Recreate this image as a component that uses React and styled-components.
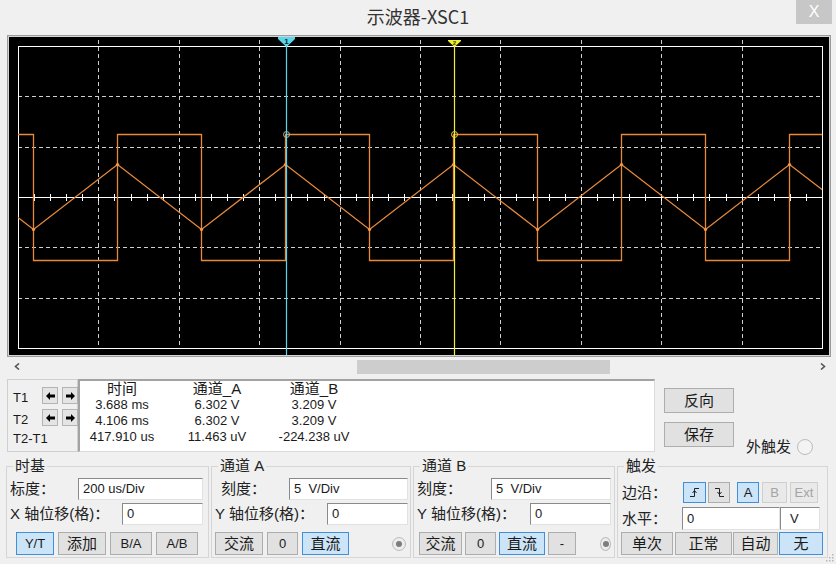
import React from 'react';
import styled, { createGlobalStyle } from 'styled-components';

const CJK = `"Noto Sans CJK SC", sans-serif`;
const UI = `"Liberation Sans", "Noto Sans CJK SC", sans-serif`;

const GlobalStyle = createGlobalStyle`
  html, body { margin: 0; padding: 0; background: #f0f0f0; }
  body { font-family: ${UI}; color: #1a1a1a; }
  * { box-sizing: border-box; }
`;

// scope geometry (page coordinates)
const X0 = 18, X1 = 822, Y0 = 46, Y1 = 348, MID = 197.5;
const DIVX = (X1 - X0) / 10, DIVY = (Y1 - Y0) / 6;
const HIGH = 134.5, LOW = 260.5, PEAK = 164.5, TROUGH = 229.5;
const edges = Array.from({ length: 10 }, (_, k) => 33.5 + 84 * k);
const px = (v) => Math.round(v) + 0.5;

const Window = styled.div`
  position: relative;
  width: 836px;
  height: 564px;
  overflow: hidden;
  background: #f0f0f0;
  display: flex;
  flex-direction: column;
`;

const TitleBar = styled.div`
  height: 35px;
  display: grid;
  grid-template-columns: 1fr auto 1fr;
  align-items: start;
`;

const Title = styled.div`
  grid-column: 2;
  padding-top: 5px;
  font-family: ${CJK};
  font-size: 18px;
  line-height: 22px;
  color: #333;
`;

const CloseButton = styled.div`
  grid-column: 3;
  justify-self: end;
  width: 36px;
  height: 24px;
  margin-right: 4px;
  background: #c7c7c7;
  color: #fff;
  font: 16px/24px "Liberation Sans", sans-serif;
  text-align: center;
`;

const ScreenFrame = styled.div`
  margin-left: 7px;
  width: 824px;
  height: 322px;
  padding: 1px;
  border: 1px solid #9c9c9c;
  background: #d4d4d4;
  svg { display: block; }
`;

const HScroll = styled.div`
  display: flex;
  height: 18px;
  padding: 0 5px 0 7px;
`;

const ScrollArrow = styled.div`
  width: ${(p) => p.$w}px;
  display: flex;
  align-items: center;
  justify-content: center;
`;

const Track = styled.div`
  flex: 1;
  padding-top: 3px;
`;

const Thumb = styled.div`
  margin-left: 330px;
  width: 253px;
  height: 14px;
  background: #cdcdcd;
`;

const ReadoutRow = styled.div`
  display: flex;
  align-items: flex-start;
  margin-top: 4px;
  height: 73px;
`;

const CursorPanel = styled.div`
  margin-left: 7px;
  width: 71px;
  height: 73px;
  border: 1px solid #cfcfcf;
  padding: 7px 0 0 5px;
  display: grid;
  grid-template-columns: 25px 16px 16px;
  grid-auto-rows: 17px;
  column-gap: 4px;
  row-gap: 5px;
  font-size: 13px;
  line-height: 17px;
`;

const CursorLabel = styled.div`
  grid-column: ${(p) => (p.$wide ? '1 / -1' : 'auto')};
  margin-top: ${(p) => (p.$wide ? 0 : 2)}px;
  line-height: ${(p) => (p.$wide ? 16 : 17)}px;
`;

const ArrowButton = styled.div`
  width: 16px;
  height: 17px;
  border: 1px solid #b4b4b4;
  background: #e4e4e4;
  display: flex;
  align-items: center;
  justify-content: center;
`;

const ReadoutTable = styled.div`
  width: 577px;
  height: 73px;
  background: #fff;
  border-top: 2px solid #a3a3a3;
  border-left: 2px solid #a3a3a3;
  border-right: 1px solid #dadada;
  border-bottom: 1px solid #dadada;
  display: grid;
  grid-template-columns: 84px 106px 88px;
  grid-auto-rows: 16px;
  align-content: start;
  font-size: 13px;
  line-height: 16px;
  text-align: center;
`;

const HeadCell = styled.div`
  font-size: 15px;
  line-height: 16px;
`;

const SideButtons = styled.div`
  margin: 9px 0 0 9px;
  display: flex;
  flex-direction: column;
  gap: 9px;
`;

const SideButton = styled.div`
  width: 70px;
  height: 25px;
  border: 1px solid #adadad;
  background: #e1e1e1;
  font-size: 15px;
  line-height: 23px;
  text-align: center;
`;

const ExtTrigger = styled.div`
  margin: 59px 0 0 12px;
  display: flex;
  align-items: center;
  gap: 6px;
  font-size: 15px;
  line-height: 18px;
  color: #222;
`;

const RoundIndicator = styled.span`
  width: ${(p) => p.$size}px;
  height: ${(p) => p.$size}px;
  border-radius: 50%;
  border: 1px solid #bcbcbc;
  background: ${(p) => (p.$on ? '#ececec' : '#f3f3f3')};
  display: flex;
  align-items: center;
  justify-content: center;
  margin-left: ${(p) => p.$ml || 0}px;
  margin-right: ${(p) => p.$mr || 0}px;
  &::after {
    content: '';
    display: ${(p) => (p.$on ? 'block' : 'none')};
    width: 6px;
    height: 6px;
    border-radius: 50%;
    background: #7d7d7d;
  }
`;

const ControlRow = styled.div`
  display: flex;
  gap: 2px;
  margin-top: 5px;
  padding-left: 6px;
`;

const Group = styled.fieldset`
  margin: 0;
  min-inline-size: 0;
  width: ${(p) => p.$w}px;
  padding: 0 ${(p) => p.$pr}px 2px 3px;
  border: 1px solid #d5d5d5;
  display: flex;
  flex-direction: column;
`;

const Legend = styled.legend`
  margin-left: 3px;
  padding: 0 2px;
  font-size: 15px;
  line-height: 18px;
  color: #222;
`;

const FieldRow = styled.div`
  display: flex;
  align-items: center;
  justify-content: ${(p) => (p.$start ? 'flex-start' : 'space-between')};
  height: ${(p) => p.$h}px;
  margin-top: ${(p) => p.$mt}px;
`;

const FieldLabel = styled.span`
  width: ${(p) => (p.$w ? `${p.$w}px` : 'auto')};
  font-size: 15px;
  line-height: 20px;
  color: #222;
  white-space: nowrap;
  padding-left: ${(p) => p.$pl || 0}px;
`;

const TextBox = styled.div`
  width: ${(p) => p.$w}px;
  height: ${(p) => p.$h || 22}px;
  background: #fff;
  border: 1px solid;
  border-color: #8a8a8a #e2e2e2 #e2e2e2 #8a8a8a;
  padding-left: ${(p) => p.$pl || 4}px;
  font-size: 13px;
  line-height: ${(p) => (p.$h || 22) - 2}px;
  white-space: pre;
`;

const ButtonRow = styled.div`
  display: flex;
  align-items: center;
  gap: ${(p) => p.$gap}px;
  height: 23px;
  margin-top: ${(p) => p.$mt}px;
  padding-left: ${(p) => p.$pl || 0}px;
`;

const Btn = styled.div`
  width: ${(p) => p.$w}px;
  height: ${(p) => p.$h || 23}px;
  margin-left: ${(p) => p.$ml || 0}px;
  flex: none;
  display: flex;
  align-items: center;
  justify-content: center;
  border: 1px solid ${(p) => (p.$active ? '#3f8fdc' : p.$disabled ? '#cfcfcf' : '#adadad')};
  background: ${(p) => (p.$active ? '#cce4f7' : p.$disabled ? '#e9e9e9' : '#e1e1e1')};
  color: ${(p) => (p.$disabled ? '#a4a4a4' : '#1a1a1a')};
  font-size: ${(p) => (p.$latin ? 13 : 15)}px;
  line-height: 20px;
`;

const Grip = styled.svg`
  position: absolute;
  right: 2px;
  bottom: 2px;
`;

function Chevron({ dir }) {
  const d = dir === 'left' ? 'M5,0.5 L1.5,3.5 L5,6.5' : 'M1,0.5 L4.5,3.5 L1,6.5';
  return (
    <svg width="6" height="7" viewBox="0 0 6 7">
      <path d={d} fill="none" stroke="#555" strokeWidth="1.6" />
    </svg>
  );
}

function BlockArrow({ dir }) {
  const pts = dir === 'left' ? '0,4 4,0 4,2.5 9,2.5 9,5.5 4,5.5 4,8' : '9,4 5,0 5,2.5 0,2.5 0,5.5 5,5.5 5,8';
  return (
    <svg width="9" height="8" viewBox="0 0 9 8">
      <polygon points={pts} fill="#000" />
    </svg>
  );
}

function EdgeIcon({ rising }) {
  const line = rising ? 'M1,9.5 H5.5 V1.5 H10' : 'M1,1.5 H5.5 V9.5 H10';
  const head = rising ? 'M3.5,6 L5.5,3.5 L7.5,6' : 'M3.5,5 L5.5,7.5 L7.5,5';
  return (
    <svg width="11" height="11" viewBox="0 0 11 11">
      <path d={line} fill="none" stroke="#222" strokeWidth="1" />
      <path d={head} fill="none" stroke="#222" strokeWidth="1" />
    </svg>
  );
}

function Scope() {
  const vLines = Array.from({ length: 9 }, (_, i) => px(X0 + DIVX * (i + 1)));
  const hLines = [1, 2, 4, 5].map((j) => px(Y0 + DIVY * j));
  const ticks = Array.from({ length: 49 }, (_, i) => px(X0 + (DIVX / 5) * (i + 1)));

  let square = `M${X0},${HIGH}`;
  edges.forEach((x, k) => {
    square += ` H${x} V${k % 2 === 0 ? LOW : HIGH}`;
  });
  square += ` H${X1}`;

  const triangle = [[X0, 217.5], ...edges.map((x, k) => [x, k % 2 === 0 ? TROUGH : PEAK]), [X1, 189.6]]
    .map((p) => p.join(','))
    .join(' ');

  return (
    <svg width="820" height="318" viewBox="9 37 820 318">
      <rect x="9" y="37" width="820" height="318" fill="#000" />
      {vLines.map((x) => (
        <line key={`v${x}`} x1={x} x2={x} y1="40" y2={Y1} stroke="#cfcfcf" strokeDasharray="4 3" />
      ))}
      {hLines.map((y) => (
        <line key={`h${y}`} x1={X0} x2={X1} y1={y} y2={y} stroke="#cfcfcf" strokeDasharray="4 3" />
      ))}
      <rect x={X0 + 0.5} y={Y0 + 0.5} width={X1 - X0} height={Y1 - Y0} fill="none" stroke="#fff" />
      <line x1={X0} x2={X1} y1={MID} y2={MID} stroke="#fff" />
      {ticks.map((x) => (
        <line key={`t${x}`} x1={x} x2={x} y1={MID - 3.5} y2={MID + 3.5} stroke="#fff" />
      ))}
      <path d={square} fill="none" stroke="#e8893a" strokeWidth="1.3" />
      <polyline points={triangle} fill="none" stroke="#e8893a" strokeWidth="1.3" />
      {edges.map((x, k) => (
        <circle key={`d${x}`} cx={x} cy={k % 2 === 0 ? TROUGH : PEAK} r="1.6" fill="#f29a48" />
      ))}

      <line x1="286.5" x2="286.5" y1="45" y2="355" stroke="#5cd6ea" strokeWidth="1.2" />
      <polygon points="278,37 295,37 295,39 286.5,47 278,39" fill="#5cd6ea" />
      <text x="286.5" y="44" fontSize="8" fontWeight="bold" fill="#0b2a30" textAnchor="middle" fontFamily="Liberation Sans">1</text>
      <circle cx="286.5" cy={HIGH} r="3" fill="none" stroke="#9fb8bd" />

      <line x1="454.5" x2="454.5" y1="45" y2="355" stroke="#f2f032" strokeWidth="1.2" />
      <polygon points="448,40 461,40 461,41 454.5,47 448,41" fill="#f2f032" />
      <text x="454.5" y="45" fontSize="6" fontWeight="bold" fill="#3a3a00" textAnchor="middle" fontFamily="Liberation Sans">2</text>
      <circle cx="454.5" cy={HIGH} r="3" fill="none" stroke="#e0de40" />
    </svg>
  );
}

const readouts = [
  ['3.688 ms', '6.302 V', '3.209 V'],
  ['4.106 ms', '6.302 V', '3.209 V'],
  ['417.910 us', '11.463 uV', '-224.238 uV'],
];

export default function App() {
  return (
    <Window>
      <GlobalStyle />
      <TitleBar>
        <Title>示波器-XSC1</Title>
        <CloseButton>X</CloseButton>
      </TitleBar>

      <ScreenFrame>
        <Scope />
      </ScreenFrame>

      <HScroll>
        <ScrollArrow $w={20}><Chevron dir="left" /></ScrollArrow>
        <Track><Thumb /></Track>
        <ScrollArrow $w={17}><Chevron dir="right" /></ScrollArrow>
      </HScroll>

      <ReadoutRow>
        <CursorPanel>
          <CursorLabel>T1</CursorLabel>
          <ArrowButton><BlockArrow dir="left" /></ArrowButton>
          <ArrowButton><BlockArrow dir="right" /></ArrowButton>
          <CursorLabel>T2</CursorLabel>
          <ArrowButton><BlockArrow dir="left" /></ArrowButton>
          <ArrowButton><BlockArrow dir="right" /></ArrowButton>
          <CursorLabel $wide>T2-T1</CursorLabel>
        </CursorPanel>

        <ReadoutTable>
          <HeadCell>时间</HeadCell>
          <HeadCell>通道_A</HeadCell>
          <HeadCell>通道_B</HeadCell>
          {readouts.map((row) => row.map((v, i) => <div key={`${v}${i}${row[0]}`}>{v}</div>))}
        </ReadoutTable>

        <SideButtons>
          <SideButton>反向</SideButton>
          <SideButton>保存</SideButton>
        </SideButtons>

        <ExtTrigger>
          外触发
          <RoundIndicator $size={16} />
        </ExtTrigger>
      </ReadoutRow>

      <ControlRow>
        <Group $w={203} $pr={5}>
          <Legend>时基</Legend>
          <FieldRow $h={22} $mt={3}>
            <FieldLabel>标度：</FieldLabel>
            <TextBox $w={125}>200 us/Div</TextBox>
          </FieldRow>
          <FieldRow $h={22} $mt={3}>
            <FieldLabel>X 轴位移(格)：</FieldLabel>
            <TextBox $w={81}>0</TextBox>
          </FieldRow>
          <ButtonRow $gap={4} $mt={7} $pl={6}>
            <Btn $w={38} $latin $active>Y/T</Btn>
            <Btn $w={48}>添加</Btn>
            <Btn $w={42} $latin>B/A</Btn>
            <Btn $w={42} $latin>A/B</Btn>
          </ButtonRow>
        </Group>

        <Group $w={200} $pr={2}>
          <Legend>通道 A</Legend>
          <FieldRow $h={22} $mt={3}>
            <FieldLabel $pl={6}>刻度：</FieldLabel>
            <TextBox $w={119}>5  V/Div</TextBox>
          </FieldRow>
          <FieldRow $h={22} $mt={3}>
            <FieldLabel>Y 轴位移(格)：</FieldLabel>
            <TextBox $w={81}>0</TextBox>
          </FieldRow>
          <ButtonRow $gap={4} $mt={7}>
            <Btn $w={48}>交流</Btn>
            <Btn $w={31} $latin>0</Btn>
            <Btn $w={47} $active>直流</Btn>
            <RoundIndicator $size={14} $on $ml={39} />
          </ButtonRow>
        </Group>

        <Group $w={202} $pr={3}>
          <Legend>通道 B</Legend>
          <FieldRow $h={22} $mt={3}>
            <FieldLabel>刻度：</FieldLabel>
            <TextBox $w={120}>5  V/Div</TextBox>
          </FieldRow>
          <FieldRow $h={22} $mt={3}>
            <FieldLabel>Y 轴位移(格)：</FieldLabel>
            <TextBox $w={81}>0</TextBox>
          </FieldRow>
          <ButtonRow $gap={3} $mt={7} $pl={2}>
            <Btn $w={43}>交流</Btn>
            <Btn $w={31} $latin>0</Btn>
            <Btn $w={46} $active>直流</Btn>
            <Btn $w={28} $latin>-</Btn>
            <RoundIndicator $size={14} $on $ml={21} />
          </ButtonRow>
        </Group>

        <Group $w={211} $pr={4}>
          <Legend>触发</Legend>
          <FieldRow $h={21} $mt={7} $start>
            <FieldLabel $w={62} $pl={1}>边沿：</FieldLabel>
            <Btn $w={23} $h={21} $active><EdgeIcon rising /></Btn>
            <Btn $w={22} $h={21} $ml={2}><EdgeIcon /></Btn>
            <Btn $w={22} $h={21} $ml={7} $latin $active>A</Btn>
            <Btn $w={25} $h={21} $ml={3} $latin $disabled>B</Btn>
            <Btn $w={28} $h={21} $ml={3} $latin $disabled>Ext</Btn>
          </FieldRow>
          <FieldRow $h={23} $mt={4} $start>
            <FieldLabel $w={61} $pl={1}>水平：</FieldLabel>
            <TextBox $w={98} $h={23}>0</TextBox>
            <TextBox $w={40} $h={23} $pl={9}>V</TextBox>
          </FieldRow>
          <ButtonRow $gap={1} $mt={2}>
            <Btn $w={52}>单次</Btn>
            <Btn $w={57} $ml={1}>正常</Btn>
            <Btn $w={45}>自动</Btn>
            <Btn $w={44} $active>无</Btn>
          </ButtonRow>
        </Group>
      </ControlRow>

      <Grip width="9" height="9" viewBox="0 0 9 9">
        {[[7, 1], [7, 4], [4, 4], [7, 7], [4, 7], [1, 7]].map(([x, y]) => (
          <rect key={`${x}-${y}`} x={x} y={y} width="1.5" height="1.5" fill="#b5b5b5" />
        ))}
      </Grip>
    </Window>
  );
}
